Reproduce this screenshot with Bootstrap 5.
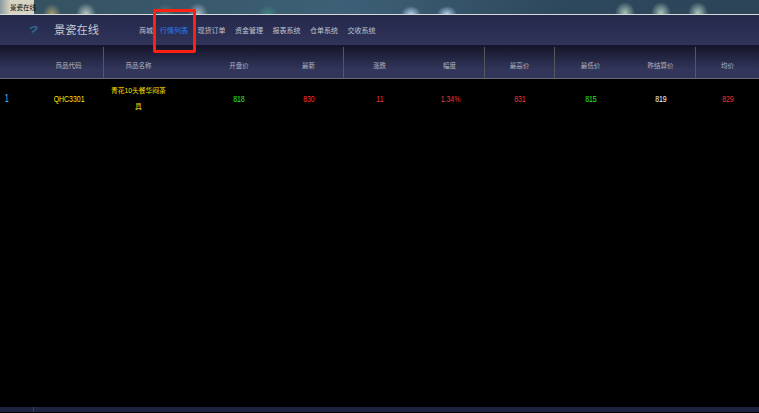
<!DOCTYPE html>
<html lang="zh-CN">
<head>
<meta charset="utf-8">
<title>景瓷在线</title>
<link href="https://cdn.jsdelivr.net/npm/bootstrap@5.3.0/dist/css/bootstrap.min.css" rel="stylesheet">
<style>
html,body{height:100%;margin:0;background:#000;overflow:hidden}
body{font-family:"Liberation Sans","Noto Sans CJK SC",sans-serif;position:relative}
.shell{height:413px;width:759px}
.desk{height:14px;background-color:#2f4b62;
background-image:
radial-gradient(ellipse 9px 10px at 52px 14px,#a89c70,transparent),
radial-gradient(ellipse 10px 11px at 86px 14px,#b8c8c0,transparent),
radial-gradient(ellipse 10px 10px at 165px 14px,#4e7f78,transparent),
radial-gradient(ellipse 10px 11px at 198px 14px,#a8bcc8,transparent),
radial-gradient(ellipse 10px 10px at 268px 15px,#3f8a80,transparent),
radial-gradient(ellipse 10px 8px at 411px 14px,#b0cfe8,transparent),
radial-gradient(ellipse 10px 8px at 447px 14px,#b0cfe8,transparent),
radial-gradient(ellipse 10px 11px at 625px 13px,#a8c4b8,transparent),
radial-gradient(ellipse 10px 11px at 661px 13px,#a8c4b8,transparent),
radial-gradient(ellipse 10px 11px at 698px 13px,#a8c4b8,transparent),
linear-gradient(90deg,#34505f,#3d6076 45%,#2d475c 75%,#2d4559)}
.wintitle{width:34px;height:14px;background:linear-gradient(90deg,#8a9aa0,#d8d4c4 30%,#d8d4c4);font-size:6.5px;line-height:16px;color:#000;padding-left:10px;white-space:nowrap}
.topbar{height:31px;border-top:1px solid #d8dcd8;background:linear-gradient(#24284a,#30345a);padding:0}
.brandmark{width:54px;padding-left:29px;display:flex;align-items:center;height:100%}
.brandname{font-size:11.25px;color:#c4c7d2;width:85px;line-height:1;margin-top:1px}
.menu{gap:9.5px;margin-top:1px}
.menu .nav-item:first-child{margin-right:-2.5px}
.menu .nav-link{padding:0;font-size:7px;line-height:1;color:#c0c4d0;white-space:nowrap}
.menu .nav-link.active{color:#2a7cf5}
.hilite{position:absolute;left:153px;top:9px;width:43px;height:44px;border:3px solid #ff2012;border-radius:2px}
.cols{display:grid;grid-template-columns:34px 70px 69px 31px 70px 70px 71px 70px 70px 71px 70px 63px;align-items:center}
.thead{height:34px;background:linear-gradient(#14152a,#32365a 75%,#31355a);border-bottom:1px solid #6a6a72;font-size:6.5px;color:#b0b4c0;text-align:center}
.thead>div{height:100%;display:flex;align-items:center;justify-content:center;padding-top:9px}
.thead .sep{border-right:1px solid #55565e;margin-top:2px;height:31px;padding-top:7px}
.trow{font-size:9.5px;text-align:center;line-height:16px;padding-top:3px}
.squeeze{display:inline-block;transform:scaleX(.73)}
.trow .namecell{font-size:6.75px;padding-top:1px}
.trow .idx{color:#40c0ff;text-align:left;padding-left:4px;font-size:10px}
.yel{color:#ffe000}.grn{color:#28f028}.red1{color:#f83030}.wht{color:#fff}
.main{height:328px;background:#000}
.foot{height:5px;background:#1e2340}
.foot i{display:block;width:1px;height:5px;margin-left:33px;background:#3a3f60}
</style>
</head>
<body>
<div class="shell d-flex flex-column">
  <div class="desk"><div class="wintitle">景瓷在线</div></div>
  <nav class="navbar topbar flex-nowrap justify-content-start align-items-center">
    <div class="brandmark">
      <svg width="10" height="9" viewBox="0 0 10 9"><path d="M1 3C2 1 6 0 8 1.500C8.500 3 6 4 3 6.500" fill="none" stroke="#2f6f98" stroke-width="1.400"/><path d="M1 7.500H9" stroke="#2a3a56" stroke-width="1.500"/></svg>
    </div>
    <div class="brandname">景瓷在线</div>
    <ul class="nav menu flex-nowrap">
      <li class="nav-item"><a class="nav-link" href="#">商城</a></li>
      <li class="nav-item"><a class="nav-link active" href="#">行情列表</a></li>
      <li class="nav-item"><a class="nav-link" href="#">现货订单</a></li>
      <li class="nav-item"><a class="nav-link" href="#">资金管理</a></li>
      <li class="nav-item"><a class="nav-link" href="#">报表系统</a></li>
      <li class="nav-item"><a class="nav-link" href="#">仓单系统</a></li>
      <li class="nav-item"><a class="nav-link" href="#">交收系统</a></li>
    </ul>
  </nav>
  <div class="cols thead">
    <div></div><div class="sep">商品代码</div><div>商品名称</div><div></div><div>开盘价</div><div class="sep">最新</div><div>涨跌</div><div class="sep">幅度</div><div class="sep">最高价</div><div>最低价</div><div class="sep">昨结算价</div><div>均价</div>
  </div>
  <div class="main">
    <div class="cols trow">
      <div class="idx"><span class="squeeze">1</span></div><div class="yel"><span class="squeeze">QHC3301</span></div><div class="yel namecell">青花10头餐华闷茶<br>具</div><div></div><div class="grn"><span class="squeeze">818</span></div><div class="red1"><span class="squeeze">830</span></div><div class="red1"><span class="squeeze">11</span></div><div class="red1"><span class="squeeze">1.34%</span></div><div class="red1"><span class="squeeze">831</span></div><div class="grn"><span class="squeeze">815</span></div><div class="wht"><span class="squeeze">819</span></div><div class="red1"><span class="squeeze">829</span></div>
    </div>
  </div>
  <div class="foot"><i></i></div>
</div>
<div class="hilite"></div>
<script src="https://cdn.jsdelivr.net/npm/bootstrap@5.3.0/dist/js/bootstrap.bundle.min.js"></script>
</body>
</html>
